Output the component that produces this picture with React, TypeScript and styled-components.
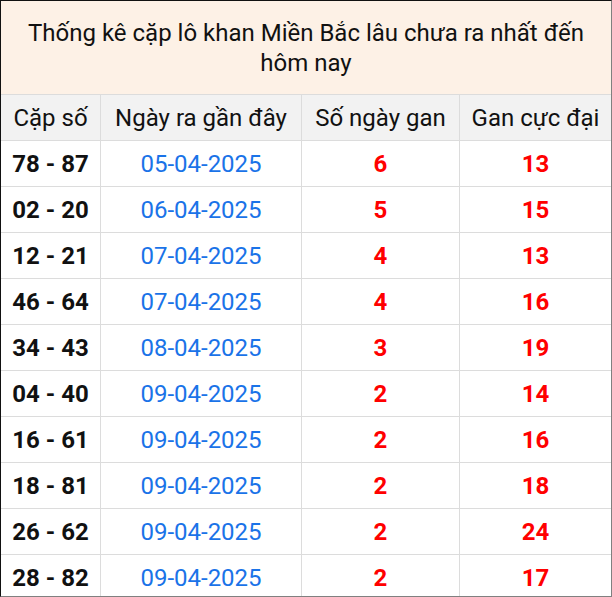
import { Fragment } from "react";
import styled, { createGlobalStyle } from "styled-components";

const GlobalStyle = createGlobalStyle`
  html, body {
    margin: 0;
    padding: 0;
    background: #fff;
  }
  body {
    font-family: Roboto, "Liberation Sans", Arial, sans-serif;
  }
`;

interface Row {
  pair: string;
  date: string;
  days: number;
  max: number;
}

const rows: Row[] = [
  { pair: "78 - 87", date: "05-04-2025", days: 6, max: 13 },
  { pair: "02 - 20", date: "06-04-2025", days: 5, max: 15 },
  { pair: "12 - 21", date: "07-04-2025", days: 4, max: 13 },
  { pair: "46 - 64", date: "07-04-2025", days: 4, max: 16 },
  { pair: "34 - 43", date: "08-04-2025", days: 3, max: 19 },
  { pair: "04 - 40", date: "09-04-2025", days: 2, max: 14 },
  { pair: "16 - 61", date: "09-04-2025", days: 2, max: 16 },
  { pair: "18 - 81", date: "09-04-2025", days: 2, max: 18 },
  { pair: "26 - 62", date: "09-04-2025", days: 2, max: 24 },
  { pair: "28 - 82", date: "09-04-2025", days: 2, max: 17 },
];

const Frame = styled.div`
  box-sizing: border-box;
  width: 612px;
  height: 597px;
  overflow: hidden;
  border-top: 1px solid #111;
  border-left: 1px solid #111;
  border-right: 1px solid #808080;
  border-bottom: 1px solid #808080;
`;

const Title = styled.div`
  box-sizing: border-box;
  height: 93px;
  display: flex;
  align-items: center;
  justify-content: center;
  padding: 0 24px;

  background: #fdf1e6;
  color: #111;
  font-size: 24px;
  line-height: 30px;
  text-align: center;
`;

const Table = styled.div`
  display: grid;
  grid-template-columns: 100px 201px 158px 1fr;
`;

const Cell = styled.div<{ $head?: boolean; $last?: boolean }>`
  box-sizing: border-box;
  height: 46px;
  display: flex;
  align-items: center;
  justify-content: center;

  border-top: 1px solid #dcdcdc;
  border-right: ${({ $last }) => ($last ? "none" : "1px solid #dcdcdc")};

  background: ${({ $head }) => ($head ? "#f2f2f2" : "#fff")};
  color: #111;
  font-size: 24px;
  white-space: nowrap;
`;

const Pair = styled(Cell)`
  font-weight: 700;
`;

const DateCell = styled(Cell)`
  color: #1a73e8;
`;

const Num = styled(Cell)`
  color: #ff0000;
  font-weight: 700;
`;

export default function App() {
  return (
    <>
      <GlobalStyle />
      <Frame>
        <Title>Thống kê cặp lô khan Miền Bắc lâu chưa ra nhất đến hôm nay</Title>
        <Table>
          <Cell $head>Cặp số</Cell>
          <Cell $head>Ngày ra gần đây</Cell>
          <Cell $head>Số ngày gan</Cell>
          <Cell $head $last>
            Gan cực đại
          </Cell>
          {rows.map((r) => (
            <Fragment key={r.pair}>
              <Pair>{r.pair}</Pair>
              <DateCell>{r.date}</DateCell>
              <Num>{r.days}</Num>
              <Num $last>{r.max}</Num>
            </Fragment>
          ))}
        </Table>
      </Frame>
    </>
  );
}
